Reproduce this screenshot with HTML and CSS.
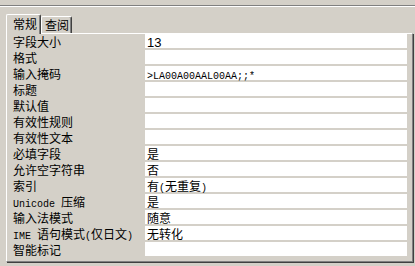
FILE: index.html
```html
<!DOCTYPE html>
<html>
<head>
  <title>字段属性</title>
  <link rel="stylesheet" href="styles.css">
</head>
<body>
  <div class="topbar"></div>

  <div class="tabs">
    <div class="tab active">常规</div>
    <div class="tab">查阅</div>
  </div>

  <div class="panel">
    <div class="prop-list">
      <div class="prop-label">字段大小</div>
      <div class="prop-value"><span class="num">13</span></div>

      <div class="prop-label">格式</div>
      <div class="prop-value"></div>

      <div class="prop-label">输入掩码</div>
      <div class="prop-value"><span class="mono">&gt;LA00A00AAL00AA;;*</span></div>

      <div class="prop-label">标题</div>
      <div class="prop-value"></div>

      <div class="prop-label">默认值</div>
      <div class="prop-value"></div>

      <div class="prop-label">有效性规则</div>
      <div class="prop-value"></div>

      <div class="prop-label">有效性文本</div>
      <div class="prop-value"></div>

      <div class="prop-label">必填字段</div>
      <div class="prop-value">是</div>

      <div class="prop-label">允许空字符串</div>
      <div class="prop-value">否</div>

      <div class="prop-label">索引</div>
      <div class="prop-value">有<span class="mono">(</span>无重复<span class="mono">)</span></div>

      <div class="prop-label"><span class="mono">Unicode </span>压缩</div>
      <div class="prop-value">是</div>

      <div class="prop-label">输入法模式</div>
      <div class="prop-value">随意</div>

      <div class="prop-label"><span class="mono">IME </span>语句模式<span class="mono">(</span>仅日文<span class="mono">)</span></div>
      <div class="prop-value">无转化</div>

      <div class="prop-label">智能标记</div>
      <div class="prop-value"></div>
    </div>
  </div>
</body>
</html>
```

FILE: styles.css
```css
:root {
  --face: #d4d0c8;
  --shadow: #808080;
  --dark: #404040;
  --light: #ffffff;
  --text: #000000;
}

body {
  margin: 0;
  width: 415px;
  height: 266px;
  overflow: hidden;
  background: var(--face);
  color: var(--text);
  font-family: "Noto Sans CJK SC", "Liberation Sans", sans-serif;
  font-size: 12px;
}

.topbar {
  height: 5px;
  border-bottom: 1px solid var(--shadow);
  box-shadow: 0 1px 0 var(--light);
}

/* tab strip */
.tabs {
  display: flex;
  align-items: flex-end;
  margin-top: 8px;
  padding-left: 6px;
  height: 19px;
}

.tab {
  position: relative;
  box-sizing: border-box;
  height: 17px;
  width: 31px;
  padding-left: 3px;
  line-height: 15px;
  border-top: 1px solid var(--light);
  border-left: 1px solid var(--light);
  border-right: 1px solid var(--dark);
  border-top-left-radius: 2px;
  border-top-right-radius: 2px;
  box-shadow: inset -1px 0 0 var(--shadow);
}

.tab.active {
  z-index: 1;
  width: 35px;
  height: 20px;
  margin-bottom: -1px;
  padding-left: 6px;
  line-height: 18px;
  background: var(--face);
}

/* property sheet */
.panel {
  box-sizing: border-box;
  width: 407px;
  margin-left: 6px;
  padding: 0 5px 5px 0;
  border-top: 1px solid var(--light);
  border-left: 1px solid var(--light);
  border-right: 1px solid var(--shadow);
  border-bottom: 1px solid var(--shadow);
  box-shadow: 1px 1px 0 var(--dark);
}

.prop-list {
  display: grid;
  grid-template-columns: 138px 1fr;
  grid-auto-rows: 14px;
  row-gap: 2px;
}

.prop-label {
  padding-left: 6px;
  line-height: 15px;
  white-space: nowrap;
}

.prop-value {
  padding-left: 2px;
  background: var(--light);
  line-height: 15px;
  white-space: nowrap;
}

.mono {
  font-family: "Liberation Mono", monospace;
  font-size: 10px;
}

.num {
  font-family: "Liberation Sans", sans-serif;
  font-size: 13px;
}
```
